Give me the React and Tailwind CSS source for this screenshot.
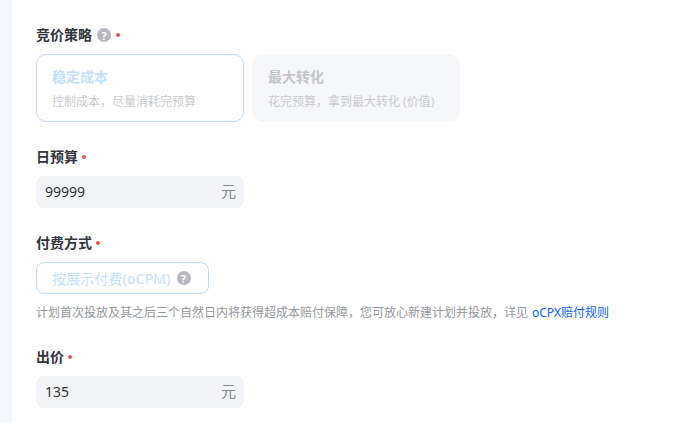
const FONT = "font-['Noto_Sans','Noto_Sans_CJK_SC',sans-serif]";

function Help({ className = "" }) {
  return (
    <span className={`inline-flex h-[14px] w-[14px] shrink-0 items-center justify-center rounded-full bg-[#b6b8bf] text-[11px] font-bold leading-none text-white ${className}`}>
      ?
    </span>
  );
}

function Dot({ className = "ml-[4px]" }) {
  return <span className={`h-[4px] w-[4px] rounded-full bg-[#ef5350] ${className}`} />;
}

function Label({ children, help }) {
  return (
    <div className="flex h-[18px] items-center text-[14px] font-bold leading-[18px] text-[#33353c]">
      <span>{children}</span>
      {help && <Help className="ml-[5px]" />}
      <Dot className={help ? "ml-[5px]" : "ml-[4px]"} />
    </div>
  );
}

function Card({ title, desc, active }) {
  return (
    <div
      className={`flex h-[68px] w-[208px] flex-col rounded-[10px] border px-[15px] pt-[12px] ${
        active ? "border-[#bcdcff] bg-white" : "border-[#f6f7fb] bg-[#f6f7fb]"
      }`}
    >
      <div className={`text-[14px] font-bold leading-[20px] ${active ? "text-[#c4e0ff]" : "text-[#c3c5cb]"}`}>{title}</div>
      <div className="mt-[6px] text-[12px] leading-[18px] text-[#c8cad0]">{desc}</div>
    </div>
  );
}

function Field({ value }) {
  return (
    <div className="flex h-[32px] w-[208px] items-center justify-between rounded-[8px] bg-[#f2f3f7] pb-[1px] pl-[9px] pr-[8px] text-[14px] text-[#33353c]">
      <span>{value}</span>
      <span className="text-[15px] text-[#85878e]">元</span>
    </div>
  );
}

export default function App() {
  return (
    <div className={`flex h-[423px] w-[686px] overflow-hidden bg-white ${FONT}`}>
      <div className="w-[12px] shrink-0 bg-[#f4f6ff]" />
      <div className="flex flex-1 flex-col pl-[24px] pt-[26px]">
        <Label help>竞价策略</Label>
        <div className="mt-[10px] flex gap-[8px]">
          <Card active title="稳定成本" desc="控制成本，尽量消耗完预算" />
          <Card title="最大转化" desc="花完预算，拿到最大转化 (价值)" />
        </div>

        <div className="mt-[26px]">
          <Label>日预算</Label>
        </div>
        <div className="mt-[10px]">
          <Field value="99999" />
        </div>

        <div className="mt-[26px]">
          <Label>付费方式</Label>
        </div>
        <div className="mt-[10px] flex h-[32px] w-[173px] items-center rounded-[8px] border border-[#bcdcff] bg-white pl-[15px] text-[14px] tracking-[0.15px] text-[#c4e0ff]">
          <span>按展示付费(oCPM)</span>
          <Help className="ml-[6px]" />
        </div>
        <div className="mt-[11px] flex h-[16px] items-center text-[12px] leading-[16px] text-[#94969c]">
          <span>计划首次投放及其之后三个自然日内将获得超成本赔付保障，您可放心新建计划并投放，详见</span>
          <span className="ml-[4px] text-[#0f62fe]">oCPX赔付规则</span>
        </div>

        <div className="mt-[27px]">
          <Label>出价</Label>
        </div>
        <div className="mt-[10px]">
          <Field value="135" />
        </div>
      </div>
    </div>
  );
}
